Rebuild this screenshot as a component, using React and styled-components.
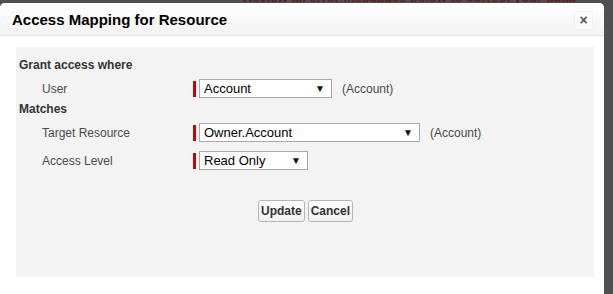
import styled, { createGlobalStyle } from 'styled-components';

const GlobalStyle = createGlobalStyle`
  html, body {
    margin: 0;
    padding: 0;
    background: #4f4f4f;
    font-family: "Liberation Sans", Arial, sans-serif;
    overflow: hidden;
  }
`;

const Page = styled.div`
  position: relative;
  width: 613px;
  height: 294px;
  overflow: hidden;
  padding-top: 3px;
  box-sizing: border-box;
`;

const BackdropText = styled.div`
  position: absolute;
  top: -10px;
  left: 243px;
  font-size: 13px;
  font-weight: bold;
  color: #5a2020;
  white-space: nowrap;
`;

const Modal = styled.div`
  position: relative;
  width: 604px;
  height: 300px;
  background: #fff;
  border-radius: 5px 5px 0 0;
  overflow: hidden;
`;

const Header = styled.div`
  height: 32px;
  display: flex;
  align-items: center;
  justify-content: space-between;
  padding: 0 11px 0 12px;
  background: linear-gradient(#ffffff, #f2f2f2);
  border-bottom: 1px solid #e3e3e3;
`;

const Title = styled.h2`
  margin: 0;
  font-size: 15px;
  font-weight: bold;
  color: #000;
`;

const CloseButton = styled.button`
  width: 19px;
  height: 19px;
  padding: 0;
  border: 1px solid #f0f0f0;
  border-radius: 3px;
  background: #fafafa;
  color: #555;
  font-family: "Liberation Sans", Arial, sans-serif;
  font-size: 14px;
  font-weight: bold;
  line-height: 15px;
  margin-top: 2px;
`;

const Body = styled.div`
  padding: 11px 10px 0 16px;
`;

const Panel = styled.div`
  height: 230px;
  background: #f3f3f3;
  padding: 11px 3px 0;
  box-sizing: border-box;
`;

const SectionTitle = styled.div`
  font-size: 12px;
  font-weight: bold;
  color: #333;
  height: 14px;
  line-height: 14px;
  margin-bottom: ${({ gap }) => gap}px;
`;

const FieldRow = styled.div`
  display: flex;
  align-items: center;
  padding-left: 23px;
  height: 19px;
  margin-bottom: ${({ gap }) => gap}px;
`;

const Label = styled.label`
  width: 151px;
  flex: none;
  font-size: 12px;
  color: #4a4a4a;
`;

const Required = styled.div`
  display: flex;
  align-items: center;
  gap: 3px;
  &:before {
    content: "";
    width: 3px;
    height: 16px;
    background: #c00;
  }
`;

const Select = styled.div`
  width: ${({ w }) => w}px;
  height: 19px;
  box-sizing: border-box;
  border: 1px solid #a9a9a9;
  background: #fff;
  display: flex;
  align-items: center;
  justify-content: space-between;
  padding: 0 6px 0 4px;
  font-size: 13px;
  color: #000;
`;

const Arrow = styled.span`
  font-size: 10px;
  color: #111;
`;

const Hint = styled.span`
  font-size: 12px;
  color: #4a4a4a;
  margin-left: 10px;
`;

const Buttons = styled.div`
  display: flex;
  justify-content: center;
  gap: 3px;
  margin-top: 30px;
  padding-left: 1px;
`;

const Button = styled.button`
  height: 22px;
  padding: 0 2px;
  border: 1px solid #b5b5b5;
  border-radius: 3px;
  background: linear-gradient(#ffffff, #f0f0f0);
  font-family: "Liberation Sans", Arial, sans-serif;
  font-size: 12px;
  font-weight: bold;
  color: #333;
`;

const Field = ({ label, width, value, hint, gap }) => (
  <FieldRow gap={gap}>
    <Label>{label}</Label>
    <Required>
      <Select w={width}>
        {value}
        <Arrow>▼</Arrow>
      </Select>
    </Required>
    {hint && <Hint>{hint}</Hint>}
  </FieldRow>
);

export default function App() {
  return (
    <Page>
      <GlobalStyle />
      <BackdropText>Review all error messages below to correct your data.</BackdropText>
      <Modal>
        <Header>
          <Title>Access Mapping for Resource</Title>
          <CloseButton>×</CloseButton>
        </Header>
        <Body>
          <Panel>
            <SectionTitle gap={7}>Grant access where</SectionTitle>
            <Field label="User" width={133} value="Account" hint="(Account)" gap={4} />
            <SectionTitle gap={7}>Matches</SectionTitle>
            <Field label="Target Resource" width={221} value="Owner.Account" hint="(Account)" gap={9} />
            <Field label="Access Level" width={109} value="Read Only" gap={0} />
            <Buttons>
              <Button>Update</Button>
              <Button>Cancel</Button>
            </Buttons>
          </Panel>
        </Body>
      </Modal>
    </Page>
  );
}
